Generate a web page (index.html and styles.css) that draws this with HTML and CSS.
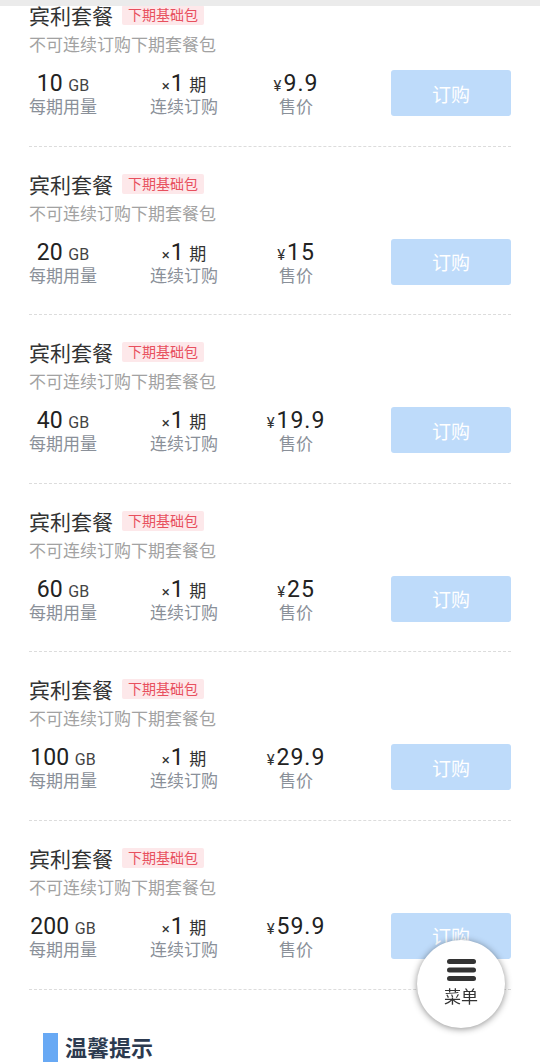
FILE: index.html
```html
<!DOCTYPE html>
<html lang="zh-CN">
<head>
  <meta charset="UTF-8" />
  <meta name="viewport" content="width=device-width, initial-scale=1" />
  <title>宾利套餐</title>
  <link rel="stylesheet" href="styles.css">
</head>
<body>

<div class="topbar"></div>

<main class="list">
  <div class="item">
    <div class="title">宾利套餐 <span class="tag">下期基础包</span></div>
    <p class="desc">不可连续订购下期套餐包</p>
    <div class="stats">
      <div class="col col-size"><div class="num">10 <small>GB</small></div><div class="label">每期用量</div></div>
      <div class="col col-times"><div class="num"><i>×</i>1 <small class="cn">期</small></div><div class="label">连续订购</div></div>
      <div class="col col-price"><div class="num price"><i>¥</i>9.9</div><div class="label">售价</div></div>
      <button class="btn">订购</button>
    </div>
  </div>

  <div class="item">
    <div class="title">宾利套餐 <span class="tag">下期基础包</span></div>
    <p class="desc">不可连续订购下期套餐包</p>
    <div class="stats">
      <div class="col col-size"><div class="num">20 <small>GB</small></div><div class="label">每期用量</div></div>
      <div class="col col-times"><div class="num"><i>×</i>1 <small class="cn">期</small></div><div class="label">连续订购</div></div>
      <div class="col col-price"><div class="num price"><i>¥</i>15</div><div class="label">售价</div></div>
      <button class="btn">订购</button>
    </div>
  </div>

  <div class="item">
    <div class="title">宾利套餐 <span class="tag">下期基础包</span></div>
    <p class="desc">不可连续订购下期套餐包</p>
    <div class="stats">
      <div class="col col-size"><div class="num">40 <small>GB</small></div><div class="label">每期用量</div></div>
      <div class="col col-times"><div class="num"><i>×</i>1 <small class="cn">期</small></div><div class="label">连续订购</div></div>
      <div class="col col-price"><div class="num price"><i>¥</i>19.9</div><div class="label">售价</div></div>
      <button class="btn">订购</button>
    </div>
  </div>

  <div class="item">
    <div class="title">宾利套餐 <span class="tag">下期基础包</span></div>
    <p class="desc">不可连续订购下期套餐包</p>
    <div class="stats">
      <div class="col col-size"><div class="num">60 <small>GB</small></div><div class="label">每期用量</div></div>
      <div class="col col-times"><div class="num"><i>×</i>1 <small class="cn">期</small></div><div class="label">连续订购</div></div>
      <div class="col col-price"><div class="num price"><i>¥</i>25</div><div class="label">售价</div></div>
      <button class="btn">订购</button>
    </div>
  </div>

  <div class="item">
    <div class="title">宾利套餐 <span class="tag">下期基础包</span></div>
    <p class="desc">不可连续订购下期套餐包</p>
    <div class="stats">
      <div class="col col-size"><div class="num">100 <small>GB</small></div><div class="label">每期用量</div></div>
      <div class="col col-times"><div class="num"><i>×</i>1 <small class="cn">期</small></div><div class="label">连续订购</div></div>
      <div class="col col-price"><div class="num price"><i>¥</i>29.9</div><div class="label">售价</div></div>
      <button class="btn">订购</button>
    </div>
  </div>

  <div class="item">
    <div class="title">宾利套餐 <span class="tag">下期基础包</span></div>
    <p class="desc">不可连续订购下期套餐包</p>
    <div class="stats">
      <div class="col col-size"><div class="num">200 <small>GB</small></div><div class="label">每期用量</div></div>
      <div class="col col-times"><div class="num"><i>×</i>1 <small class="cn">期</small></div><div class="label">连续订购</div></div>
      <div class="col col-price"><div class="num price"><i>¥</i>59.9</div><div class="label">售价</div></div>
      <button class="btn">订购</button>
    </div>
  </div>

  <h2 class="tips-title"><span class="bar"></span>温馨提示</h2>
</main>

<div class="fab" role="button" tabindex="0">
  <svg width="29" height="22" viewBox="0 0 29 22" aria-hidden="true">
    <rect x="0" y="0" width="29" height="5" rx="2.5" fill="#333"/>
    <rect x="0" y="8.5" width="29" height="5" rx="2.5" fill="#333"/>
    <rect x="0" y="17" width="29" height="5" rx="2.5" fill="#333"/>
  </svg>
  <span>菜单</span>
</div>

</body>
</html>
```

FILE: styles.css
```css
* {
  margin: 0; padding: 0; box-sizing: border-box;
}
body {
  font-family: Roboto, "Noto Sans CJK SC", sans-serif;
  background: #fff;
  color: #222;
  overflow: hidden;
}

/* barra cinza do topo (sobre o conteúdo rolado) */
.topbar {
  position: fixed;
  top: 0;
  left: 0;
  width: 100%;
  height: 6px;
  background: #ebebeb;
  z-index: 10;
}

.list {
  padding: 0 29px;
}
.item {
  padding: 22px 0 29.6px;
  border-bottom: 1px dashed #dcdcdc;
}
.item:first-child {
  padding-top: 0;
}

.title {
  display: flex;
  align-items: center;
  height: 30px;
  font-size: 21px;
  color: #333;
}
.tag {
  margin-left: 9px;
  height: 20px;
  line-height: 20px;
  padding: 0 6px;
  font-size: 14px;
  color: #e8505e;
  background: #fde8ea;
  border-radius: 2px;
}
.desc {
  height: 30px;
  font-size: 17px;
  line-height: 30px;
  color: #a2a2a2;
}

.stats {
  display: flex;
  align-items: center;
  height: 46px;
  margin-top: 10px;
}
.col {
  text-align: center;
}
.col-size { width: 68px; }
.col-times { width: 100px; margin-left: 37px; }
.col-price { width: 100px; margin-left: 12px; }

.num {
  height: 28px;
  font-size: 23px;
  line-height: 28px;
  color: #222;
  white-space: nowrap;
}
.num small {
  font-size: 16px;
  line-height: 1;
  color: #444;
}
.num small.cn {
  font-size: 17px;
  color: #333;
}
.num i {
  font-style: normal;
  font-size: 15px;
  line-height: 1;
  color: #333;
  margin-right: 1px;
}
.num.price {
  letter-spacing: 1px;
}
.num.price i {
  margin-right: 2px;
  letter-spacing: 0;
}
.label {
  height: 18px;
  font-size: 17px;
  line-height: 18px;
  color: #8a9099;
}

.btn {
  margin-left: auto;
  width: 120px;
  height: 46px;
  border: none;
  border-radius: 3px;
  background: #bedbfa;
  color: #fff;
  font-family: inherit;
  font-size: 19px;
  cursor: pointer;
}

.tips-title {
  display: flex;
  align-items: center;
  gap: 7px;
  margin: 43px 0 0 14px;
  font-size: 22px;
  line-height: 32px;
  font-weight: 700;
  color: #2c3a4f;
}
.tips-title .bar {
  width: 15px;
  height: 32px;
  background: #68a9f4;
}

/* botão flutuante do menu */
.fab {
  position: fixed;
  right: 35px;
  bottom: 34px;
  width: 88px;
  height: 88px;
  border-radius: 50%;
  background: #fff;
  box-shadow: 0 1px 7px rgba(0,0,0,0.45);
  display: flex;
  flex-direction: column;
  align-items: center;
  padding-top: 19px;
  gap: 6px;
  cursor: pointer;
  z-index: 20;
}
.fab span {
  font-size: 17px;
  line-height: 20px;
  color: #333;
}
```
